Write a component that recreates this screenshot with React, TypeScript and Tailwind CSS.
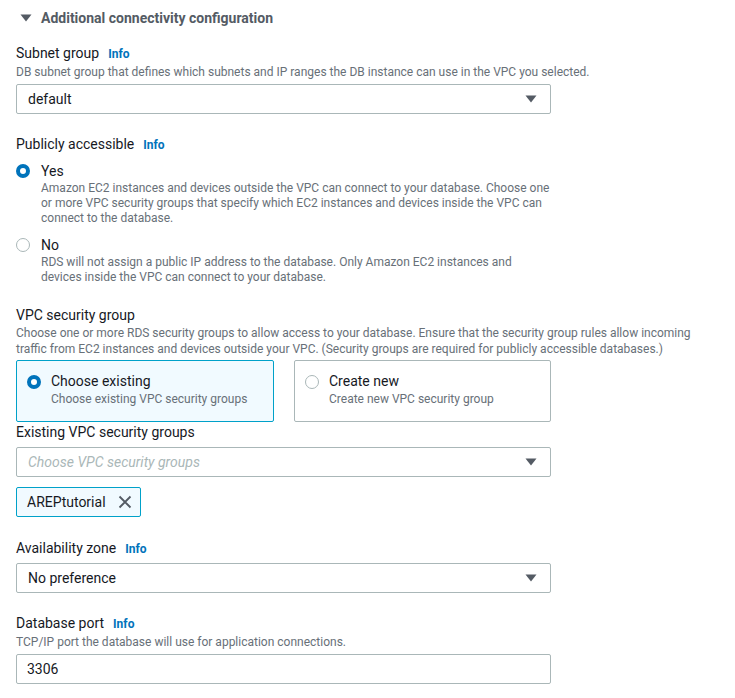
import React from "react";

const font = { fontFamily: "Roboto, 'Liberation Sans', Arial, sans-serif" };

function Caret() {
  return (
    <svg width="12" height="8" viewBox="0 0 12 8" className="shrink-0">
      <path d="M0.5 0.5 H11.5 L6 7.5 Z" fill="#545b64" />
    </svg>
  );
}

function Info() {
  return <span className="ml-[9px] text-[12px] font-bold text-[#0073bb]">Info</span>;
}

function Radio({ checked }: { checked: boolean }) {
  return checked ? (
    <span className="box-border block h-[14px] w-[14px] shrink-0 rounded-full border-[4px] border-[#0073bb] bg-white" />
  ) : (
    <span className="box-border block h-[14px] w-[14px] shrink-0 rounded-full border-[1px] border-[#aab7b8] bg-white" />
  );
}

function Select({ value, placeholder }: { value?: string; placeholder?: string }) {
  return (
    <div className="box-border flex h-[30px] w-[535px] items-center justify-between rounded-[2px] border border-[#aab7b8] bg-white pl-[11px] pr-[13px]">
      {value ? (
        <span className="text-[14px] text-[#16191f]">{value}</span>
      ) : (
        <span className="text-[14px] italic text-[#aab7b8]">{placeholder}</span>
      )}
      <Caret />
    </div>
  );
}

export default function App() {
  return (
    <div className="min-h-[698px] w-[735px] bg-white text-[#16191f]" style={font}>
      <div className="px-4 pt-[8px]">
        <div className="flex items-center">
          <svg width="12" height="8" viewBox="0 0 12 8" className="ml-[4px]">
            <path d="M0.5 0.5 H11.5 L6 7.5 Z" fill="#545b64" />
          </svg>
          <span className="ml-[9px] text-[14px] font-bold leading-[20px] text-[#545b64]">
            Additional connectivity configuration
          </span>
        </div>

        <div className="mt-[15px]">
          <div className="flex items-baseline leading-[20px]">
            <span className="text-[14px]">Subnet group</span>
            <Info />
          </div>
          <div className="text-[12px] leading-[16px] text-[#687078]">
            DB subnet group that defines which subnets and IP ranges the DB instance can use in the VPC you selected.
          </div>
          <div className="mt-[4px]">
            <Select value="default" />
          </div>
        </div>

        <div className="mt-[20px]">
          <div className="flex items-baseline leading-[20px]">
            <span className="text-[14px]">Publicly accessible</span>
            <Info />
          </div>
          <div className="mt-[6px] flex">
            <div className="pt-[3px]">
              <Radio checked />
            </div>
            <div className="ml-[11px] w-[510px]">
              <div className="text-[14px] leading-[20px]">Yes</div>
              <div className="text-[12px] leading-[15px] text-[#687078]">
                Amazon EC2 instances and devices outside the VPC can connect to your database. Choose one or more VPC security groups that specify which EC2 instances and devices inside the VPC can connect to the database.
              </div>
            </div>
          </div>
          <div className="mt-[9px] flex">
            <div className="pt-[3px]">
              <Radio checked={false} />
            </div>
            <div className="ml-[11px] w-[510px]">
              <div className="text-[14px] leading-[20px]">No</div>
              <div className="text-[12px] leading-[15px] text-[#687078]">
                RDS will not assign a public IP address to the database. Only Amazon EC2 instances and devices inside the VPC can connect to your database.
              </div>
            </div>
          </div>
        </div>

        <div className="mt-[20px]">
          <div className="text-[14px] leading-[20px]">VPC security group</div>
          <div className="w-[700px] text-[12px] leading-[16px] text-[#687078]">
            Choose one or more RDS security groups to allow access to your database. Ensure that the security group rules allow incoming traffic from EC2 instances and devices outside your VPC. (Security groups are required for publicly accessible databases.)
          </div>
          <div className="mt-[3px] flex gap-[20px]">
            <div className="box-border flex h-[62px] w-[258px] rounded-[2px] border border-[#00a1c9] bg-[#f1faff] pl-[10px] pt-[10px]">
              <div className="pt-[4px]">
                <Radio checked />
              </div>
              <div className="ml-[10px]">
                <div className="text-[14px] leading-[20px]">Choose existing</div>
                <div className="text-[12px] leading-[16px] text-[#687078]">Choose existing VPC security groups</div>
              </div>
            </div>
            <div className="box-border flex h-[62px] w-[257px] rounded-[2px] border border-[#aab7b8] bg-white pl-[10px] pt-[10px]">
              <div className="pt-[4px]">
                <Radio checked={false} />
              </div>
              <div className="ml-[10px]">
                <div className="text-[14px] leading-[20px]">Create new</div>
                <div className="text-[12px] leading-[16px] text-[#687078]">Create new VPC security group</div>
              </div>
            </div>
          </div>
          <div className="text-[14px] leading-[20px]">Existing VPC security groups</div>
          <div className="mt-[5px]">
            <Select placeholder="Choose VPC security groups" />
          </div>
          <div className="mt-[10px] flex">
            <div className="box-border flex h-[30px] items-center rounded-[2px] border border-[#00a1c9] bg-[#f1faff] pl-[10px] pr-[8px]">
              <span className="text-[14px]">AREPtutorial</span>
              <svg width="14" height="14" viewBox="0 0 14 14" className="ml-[12px]">
                <path d="M1.5 1.5 L12.5 12.5 M12.5 1.5 L1.5 12.5" stroke="#545b64" strokeWidth="1.8" />
              </svg>
            </div>
          </div>
        </div>

        <div className="mt-[21px]">
          <div className="flex items-baseline leading-[20px]">
            <span className="text-[14px]">Availability zone</span>
            <Info />
          </div>
          <div className="mt-[4px]">
            <Select value="No preference" />
          </div>
        </div>

        <div className="mt-[20px]">
          <div className="flex items-baseline leading-[20px]">
            <span className="text-[14px]">Database port</span>
            <Info />
          </div>
          <div className="text-[12px] leading-[16px] text-[#687078]">
            TCP/IP port the database will use for application connections.
          </div>
          <div className="mt-[4px] box-border flex h-[30px] w-[535px] items-center rounded-[2px] border border-[#aab7b8] bg-white pl-[10px]">
            <span className="text-[14px]">3306</span>
          </div>
        </div>
      </div>
    </div>
  );
}
